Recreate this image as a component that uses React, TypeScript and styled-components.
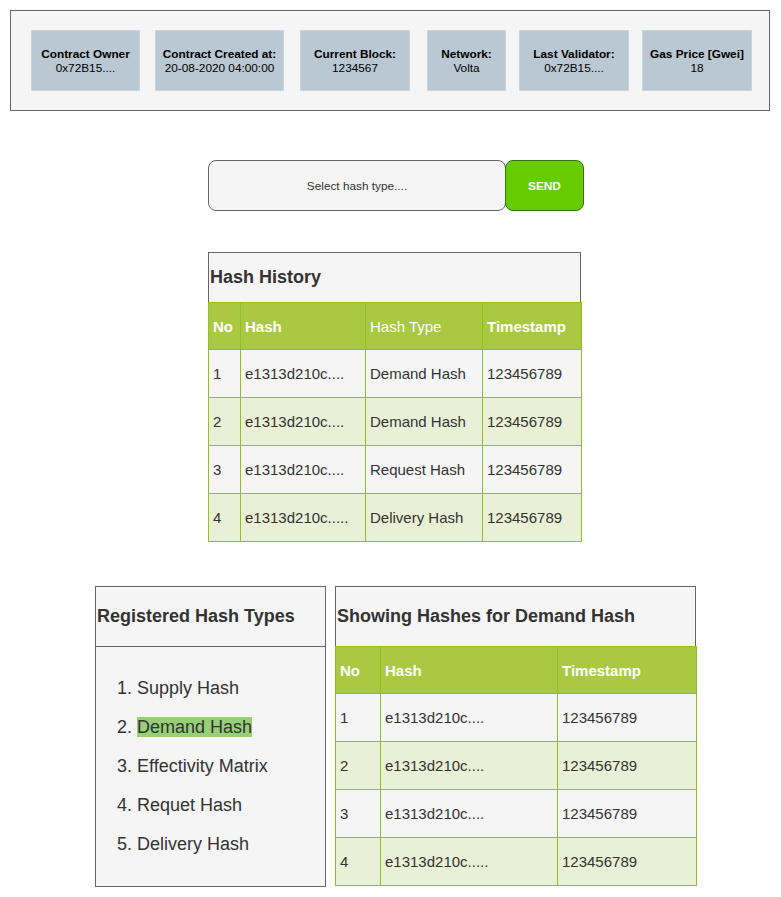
import React from "react";
import styled, { createGlobalStyle } from "styled-components";

const Global = createGlobalStyle`
  html, body { margin: 0; padding: 0; background: #ffffff; }
  body { font-family: "Liberation Sans", Arial, sans-serif; color: #333333; }
  * { box-sizing: border-box; }
`;

const Page = styled.div`
  width: 781px;
  padding-top: 10px;
  display: flex;
  flex-direction: column;
`;

const InfoPanel = styled.div`
  margin-left: 10px;
  width: 760px;
  height: 101px;
  border: 1px solid #666666;
  background: #f5f5f5;
  display: flex;
  align-items: flex-start;
  padding: 19px 0 0 20px;
`;

const InfoCard = styled.div<{ $w: number; $ml: number }>`
  width: ${(p) => p.$w}px;
  margin-left: ${(p) => p.$ml}px;
  height: 61px;
  background: #bac8d3;
  border: 1px solid #c9d4dd;
  display: flex;
  flex-direction: column;
  align-items: center;
  justify-content: center;
  font-size: 11.8px;
  line-height: 14px;
  color: #000000;
  text-align: center;
  white-space: nowrap;
`;

const CardLabel = styled.div`
  font-weight: bold;
`;

const SelectRow = styled.div`
  margin-top: 49px;
  padding-left: 208px;
  display: flex;
`;

const SelectBox = styled.div`
  width: 298px;
  height: 51px;
  border: 1px solid #666666;
  border-radius: 8px;
  background: #f5f5f5;
  display: flex;
  align-items: center;
  justify-content: center;
  font-size: 11.8px;
  color: #333333;
`;

const SendButton = styled.button`
  margin-left: -1px;
  width: 79px;
  height: 51px;
  border: 1px solid #2d7600;
  border-radius: 8px;
  background: #66cc00;
  color: #ffffff;
  font-family: "Liberation Sans", Arial, sans-serif;
  font-weight: bold;
  font-size: 11.8px;
  padding: 0;
`;

const HistorySection = styled.div`
  margin-top: 41px;
  margin-left: 208px;
  width: 374px;
  display: flex;
  flex-direction: column;
`;

const TitleBox = styled.div<{ $w: number; $h: number }>`
  width: ${(p) => p.$w}px;
  height: ${(p) => p.$h}px;
  border: 1px solid #666666;
  background: #f5f5f5;
  display: flex;
  align-items: center;
  padding-left: 1px;
  font-size: 18px;
  font-weight: bold;
  color: #333333;
  white-space: nowrap;
`;

const Table = styled.table<{ $w: number }>`
  width: ${(p) => p.$w}px;
  border-collapse: collapse;
  table-layout: fixed;
  font-size: 15px;
  margin-top: -1px;
`;

const HeadCell = styled.th<{ $w?: number; $plain?: boolean }>`
  width: ${(p) => (p.$w ? `${p.$w}px` : "auto")};
  height: 47px;
  background: #a9c943;
  border: 1px solid #93bf23;
  color: #ffffff;
  font-weight: ${(p) => (p.$plain ? "normal" : "bold")};
  text-align: left;
  padding: 0 0 0 4px;
`;

const Row = styled.tr<{ $alt: boolean }>`
  background: ${(p) => (p.$alt ? "#e9f0d5" : "#f5f5f5")};
`;

const Cell = styled.td`
  height: 48px;
  border: 1px solid #93bf23;
  padding: 0 0 0 4px;
  color: #333333;
  white-space: nowrap;
`;

const BottomRow = styled.div`
  margin-top: 44px;
  padding-left: 95px;
  display: flex;
  align-items: flex-start;
  gap: 9px;
`;

const TypesPanel = styled.div`
  width: 231px;
  height: 301px;
  border: 1px solid #666666;
  background: #f5f5f5;
  display: flex;
  flex-direction: column;
`;

const TypesTitle = styled.div`
  height: 60px;
  border-bottom: 1px solid #666666;
  display: flex;
  align-items: center;
  padding-left: 1px;
  font-size: 18px;
  font-weight: bold;
  color: #333333;
`;

const TypeList = styled.ol`
  margin: 0;
  padding: 22px 0 0 41px;
  font-size: 18px;
  line-height: 39px;
  color: #333333;
`;

const Highlight = styled.span`
  background: #97d077;
`;

const ShowingSection = styled.div`
  width: 362px;
  display: flex;
  flex-direction: column;
`;

const history = [
  ["1", "e1313d210c....", "Demand Hash", "123456789"],
  ["2", "e1313d210c....", "Demand Hash", "123456789"],
  ["3", "e1313d210c....", "Request Hash", "123456789"],
  ["4", "e1313d210c.....", "Delivery Hash", "123456789"],
];

const showing = [
  ["1", "e1313d210c....", "123456789"],
  ["2", "e1313d210c....", "123456789"],
  ["3", "e1313d210c....", "123456789"],
  ["4", "e1313d210c.....", "123456789"],
];

const cards = [
  { label: "Contract Owner", value: "0x72B15....", w: 109, ml: 0 },
  { label: "Contract Created at:", value: "20-08-2020 04:00:00", w: 129, ml: 15 },
  { label: "Current Block:", value: "1234567", w: 110, ml: 16 },
  { label: "Network:", value: "Volta", w: 79, ml: 17 },
  { label: "Last Validator:", value: "0x72B15....", w: 110, ml: 13 },
  { label: "Gas Price [Gwei]", value: "18", w: 110, ml: 13 },
];

export default function App() {
  return (
    <>
      <Global />
      <Page>
        <InfoPanel>
          {cards.map((c) => (
            <InfoCard key={c.label} $w={c.w} $ml={c.ml}>
              <CardLabel>{c.label}</CardLabel>
              <div>{c.value}</div>
            </InfoCard>
          ))}
        </InfoPanel>

        <SelectRow>
          <SelectBox>Select hash type....</SelectBox>
          <SendButton>SEND</SendButton>
        </SelectRow>

        <HistorySection>
          <TitleBox $w={373} $h={51}>Hash History</TitleBox>
          <Table $w={374}>
            <thead>
              <tr>
                <HeadCell $w={32}>No</HeadCell>
                <HeadCell $w={125}>Hash</HeadCell>
                <HeadCell $w={117} $plain>Hash Type</HeadCell>
                <HeadCell>Timestamp</HeadCell>
              </tr>
            </thead>
            <tbody>
              {history.map((r, i) => (
                <Row key={i} $alt={i % 2 === 1}>
                  {r.map((v, j) => (
                    <Cell key={j}>{v}</Cell>
                  ))}
                </Row>
              ))}
            </tbody>
          </Table>
        </HistorySection>

        <BottomRow>
          <TypesPanel>
            <TypesTitle>Registered Hash Types</TypesTitle>
            <TypeList>
              <li>Supply Hash</li>
              <li>
                <Highlight>Demand Hash</Highlight>
              </li>
              <li>Effectivity Matrix</li>
              <li>Requet Hash</li>
              <li>Delivery Hash</li>
            </TypeList>
          </TypesPanel>

          <ShowingSection>
            <TitleBox $w={361} $h={61}>Showing Hashes for Demand Hash</TitleBox>
            <Table $w={362}>
              <thead>
                <tr>
                  <HeadCell $w={45}>No</HeadCell>
                  <HeadCell $w={177}>Hash</HeadCell>
                  <HeadCell>Timestamp</HeadCell>
                </tr>
              </thead>
              <tbody>
                {showing.map((r, i) => (
                  <Row key={i} $alt={i % 2 === 1}>
                    {r.map((v, j) => (
                      <Cell key={j}>{v}</Cell>
                    ))}
                  </Row>
                ))}
              </tbody>
            </Table>
          </ShowingSection>
        </BottomRow>
      </Page>
    </>
  );
}
